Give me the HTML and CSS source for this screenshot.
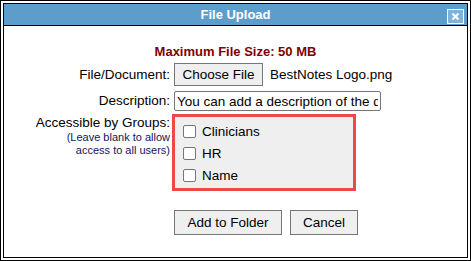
FILE: index.html
```html
<!DOCTYPE html>
<html lang="en">
<head>
  <meta charset="UTF-8">
  <title>File Upload</title>
  <link rel="stylesheet" href="styles.css">
</head>
<body>
<div class="Frame">
  <div class="Dialog">
    <div class="Dialog__Header">
      <span class="Dialog__Title">File Upload</span>
      <span class="Dialog__Close">
        <svg width="17" height="15" viewBox="0 0 17 15">
          <rect x="0.5" y="0.5" width="16" height="14" fill="#7fb2d9" stroke="#ffffff"/>
          <path d="M5.5 4.5 L11.5 10.5 M11.5 4.5 L5.5 10.5" stroke="#ffffff" stroke-width="2.2"/>
        </svg>
      </span>
    </div>
    <div class="Dialog__Body">
      <div class="Form__Limit">Maximum File Size: 50 MB</div>

      <div class="Form__Label">File/Document:</div>
      <div class="Form__Field">
        <button class="Form__Button Form__Button--File">Choose File</button>
        <span class="Form__FileName">BestNotes Logo.png</span>
      </div>

      <div class="Form__Label Form__Label--Description">Description:</div>
      <div class="Form__Field Form__Field--Description">
        <input class="Form__Input" type="text" value="You can add a description of the document here">
      </div>

      <div class="Form__Label Form__Label--Groups">
        Accessible by Groups:
        <div class="Form__Hint">(Leave blank to allow<br>access to all users)</div>
      </div>
      <div class="Form__Field Form__Field--Groups">
        <div class="Groups">
          <label class="Groups__Item"><span class="Groups__Box"></span>Clinicians</label>
          <label class="Groups__Item"><span class="Groups__Box"></span>HR</label>
          <label class="Groups__Item"><span class="Groups__Box"></span>Name</label>
        </div>
      </div>

      <div class="Form__Actions">
        <button class="Form__Button Form__Button--Add">Add to Folder</button>
        <button class="Form__Button">Cancel</button>
      </div>
    </div>
  </div>
</div>
</body>
</html>
```

FILE: styles.css
```css
html, body {
  margin: 0;
  padding: 0;
  background-color: #ffffff;
  font-family: "Liberation Sans", Arial, sans-serif;
  font-size: 13.5px;
  color: #000000;
}

.Frame {
  width: 471px;
  height: 261px;
  box-sizing: border-box;
  border: 1px solid #000000;
  padding: 2px;
}

.Dialog {
  height: 100%;
  box-sizing: border-box;
  border: 1px solid #000000;
}

.Dialog__Header {
  position: relative;
  height: 21px;
  background-color: #5c9dcb;
  border-bottom: 1px solid #000000;
  text-align: center;
}

.Dialog__Title {
  color: #ffffff;
  font-weight: bold;
  font-size: 13px;
  line-height: 21px;
}

.Dialog__Close {
  position: absolute;
  right: 3px;
  top: 5px;
  width: 17px;
  height: 15px;
}

.Dialog__Close svg {
  display: block;
}

.Dialog__Body {
  display: grid;
  grid-template-columns: 166px 1fr;
  column-gap: 4px;
  padding-top: 18px;
}

.Form__Limit {
  grid-column: 1 / 3;
  text-align: center;
  color: #800000;
  font-weight: bold;
  font-size: 13px;
  line-height: 15px;
  margin-bottom: 4px;
}

.Form__Label {
  text-align: right;
  line-height: 16px;
  align-self: center;
}

.Form__Label--Description {
  margin-top: 5px;
}

.Form__Label--Groups {
  align-self: start;
  margin-top: 4px;
}

.Form__Hint {
  font-size: 11px;
  line-height: 13px;
  color: #14145a;
}

.Form__Field {
  display: flex;
  align-items: center;
  gap: 7px;
}

.Form__Field--Description {
  margin-top: 5px;
}

.Form__Field--Groups {
  margin-top: 3px;
}

.Form__Button {
  font-family: "Liberation Sans", Arial, sans-serif;
  font-size: 13.5px;
  color: #000000;
  background-color: #efefef;
  border: 1px solid #767676;
  border-radius: 0;
  height: 23px;
  padding: 0 12px;
  margin: 0;
}

.Form__Button--File {
  width: 89px;
  padding: 0;
}

.Form__Input {
  font-family: "Liberation Sans", Arial, sans-serif;
  font-size: 13.5px;
  width: 207px;
  height: 20px;
  box-sizing: border-box;
  border: 1px solid #767676;
  border-radius: 2px;
  padding: 0 2px;
  margin: 0;
}

.Groups {
  margin-left: -2px;
  width: 184px;
  height: 77px;
  box-sizing: border-box;
  border: 3px solid #f04848;
  background-color: #efefef;
  padding: 8px 8px;
  display: flex;
  flex-direction: column;
  gap: 9px;
}

.Groups__Item {
  display: flex;
  align-items: center;
  gap: 6px;
  height: 13px;
  line-height: 13px;
}

.Groups__Box {
  width: 11px;
  height: 11px;
  border: 1px solid #767676;
  border-radius: 2px;
  background-color: #ffffff;
}

.Form__Actions {
  grid-column: 2;
  display: flex;
  gap: 8px;
  margin-top: 19px;
}

.Form__Actions .Form__Button {
  height: 25px;
}

.Form__Button--Add {
  width: 108px;
}

.Form__Actions .Form__Button:last-child {
  width: 68px;
  padding: 0;
}
```
